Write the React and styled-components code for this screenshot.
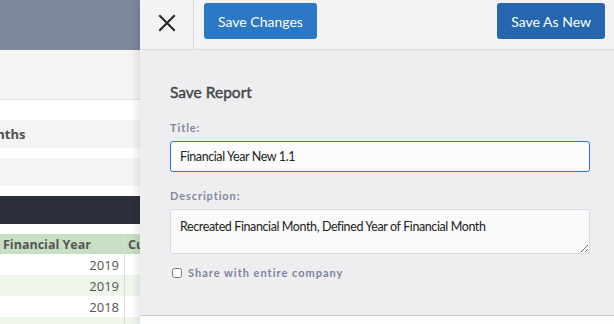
import React from "react";
import styled, { createGlobalStyle } from "styled-components";

const Global = createGlobalStyle`
  html, body { margin: 0; padding: 0; }
  body { width: 614px; height: 324px; overflow: hidden; font-family: "Open Sans", sans-serif; }
  * { box-sizing: border-box; }
`;

const Screen = styled.div`
  position: relative;
  width: 614px;
  height: 324px;
  overflow: hidden;
  background: #fff;
`;

const Page = styled.div`
  display: flex;
  flex-direction: column;
  width: 140px;
  overflow: hidden;
`;

const PageHeader = styled.div`
  height: 50px;
  background: #7e879b;
`;

const Toolbar = styled.div`
  height: 50px;
  background: #f4f4f4;
  border-bottom: 1px solid #e2e2e2;
`;

const Band = styled.div`
  height: ${(p) => p.$h}px;
  background: ${(p) => p.$bg};
  margin-top: ${(p) => p.$mt || 0}px;
  display: flex;
  align-items: center;
  overflow: hidden;
  white-space: nowrap;
`;

const BandLabel = styled.span`
  font-family: "Open Sans", sans-serif;
  font-weight: 700;
  font-size: 13px;
  color: #4f4f4f;
  margin-left: -24px;
`;

const Table = styled.div`
  margin-top: 10px;
  display: flex;
  flex-direction: column;
`;

const Row = styled.div`
  display: grid;
  grid-template-columns: 125px 1fr;
  height: ${(p) => (p.$head ? 20 : 21)}px;
  background: ${(p) => (p.$head ? "#c9dfc4" : p.$alt ? "#eef6ec" : "#fff")};
  font-family: "Open Sans", sans-serif;
  font-size: 13px;
  color: #555;
`;

const Cell = styled.div`
  display: flex;
  align-items: center;
  justify-content: ${(p) => (p.$right ? "flex-end" : "flex-start")};
  padding: 0 5px 0 3px;
  border-right: ${(p) => (p.$sep ? "1px solid #dcdcdc" : "none")};
  font-weight: ${(p) => (p.$bold ? 700 : 400)};
  font-size: ${(p) => (p.$bold ? 12.5 : 13)}px;
  white-space: nowrap;
  overflow: hidden;
`;

const Drawer = styled.aside`
  position: absolute;
  top: 0;
  left: 140px;
  width: 474px;
  height: 324px;
  display: flex;
  flex-direction: column;
  background: #fcfdfd;
  box-shadow: -3px 0 7px rgba(0, 0, 0, 0.1);
  font-family: Lato, "Open Sans", sans-serif;
`;

const DrawerHeader = styled.header`
  height: 50px;
  flex: none;
  display: flex;
  align-items: stretch;
  background: #f3f3f5;
  border-bottom: 1px solid #dcdce0;
`;

const CloseCell = styled.button`
  width: 54px;
  border: none;
  border-right: 1px solid #d6d6da;
  background: transparent;
  display: flex;
  align-items: center;
  justify-content: center;
  padding: 0 0 4px 0;
  cursor: pointer;
`;

const Actions = styled.div`
  flex: 1;
  display: flex;
  justify-content: space-between;
  align-items: flex-start;
  padding: 3px 9px 0 10px;
`;

const Button = styled.button`
  height: 36px;
  padding: 0 ${(p) => p.$px}px;
  border: none;
  border-radius: 3px;
  background: ${(p) => p.$bg};
  color: #fff;
  font-family: Lato, sans-serif;
  font-size: 14px;
  cursor: pointer;
`;

const Body = styled.div`
  height: 266px;
  flex: none;
  background: #eeeef1;
  border-bottom: 1px solid #cbcbd3;
  padding: 33px 24px 0 30px;
  display: flex;
  flex-direction: column;
`;

const Heading = styled.h2`
  margin: 0;
  font-size: 15.5px;
  line-height: 18px;
  font-weight: 400;
  color: #444;
  -webkit-text-stroke: 0.4px #444;
`;

const FieldLabel = styled.label`
  margin-top: ${(p) => p.$mt}px;
  font-size: 11px;
  line-height: 14px;
  font-weight: 700;
  letter-spacing: 0.9px;
  color: #8088a0;
`;

const Input = styled.input`
  margin-top: 6px;
  height: 31px;
  width: 420px;
  border: 1px solid #2b77c6;
  border-radius: 3px;
  background: #fcfcfc;
  padding: 0 9px;
  font-family: Lato, sans-serif;
  font-size: 12.5px;
  letter-spacing: -0.4px;
  color: #222;
  outline: none;
`;

const TextArea = styled.textarea`
  margin-top: 6px;
  height: 45px;
  width: 420px;
  border: 1px solid #d3dae5;
  border-radius: 3px;
  background: #fafafa;
  padding: 9px 9px;
  font-family: Lato, sans-serif;
  font-size: 12.5px;
  letter-spacing: -0.4px;
  line-height: 16px;
  color: #222;
  resize: vertical;
  outline: none;
`;

const CheckRow = styled.label`
  margin-top: 12px;
  display: flex;
  align-items: center;
  gap: 6px;
  padding-left: 2px;
  font-size: 11px;
  font-weight: 700;
  letter-spacing: 1px;
  color: #7d849b;
`;

const Check = styled.input`
  margin: 0;
  width: 10px;
  height: 10px;
`;

const years = ["2019", "2019", "2018", "2018"];

export default function App() {
  return (
    <>
      <Global />
      <Screen>
        <Page>
          <PageHeader />
          <Toolbar />
          <Band $h={28} $bg="#f4f4f4" $mt={20}>
            <BandLabel>Months</BandLabel>
          </Band>
          <Band $h={28} $bg="#f4f4f4" $mt={10} />
          <Band $h={28} $bg="#2b303b" $mt={10} />
          <Table>
            <Row $head>
              <Cell $sep $bold>Financial Year</Cell>
              <Cell $bold>Cu</Cell>
            </Row>
            {years.map((y, i) => (
              <Row key={i} $alt={i % 2 === 1}>
                <Cell $sep $right>{y}</Cell>
                <Cell />
              </Row>
            ))}
          </Table>
        </Page>
        <Drawer>
          <DrawerHeader>
            <CloseCell aria-label="Close">
              <svg width="18" height="18" viewBox="0 0 18 18">
                <path d="M2 2 L16 16 M16 2 L2 16" stroke="#222" strokeWidth="2" strokeLinecap="square" />
              </svg>
            </CloseCell>
            <Actions>
              <Button $bg="#2a78c6" $px={14}>Save Changes</Button>
              <Button $bg="#2467ae" $px={14}>Save As New</Button>
            </Actions>
          </DrawerHeader>
          <Body>
            <Heading>Save Report</Heading>
            <FieldLabel $mt={20}>Title:</FieldLabel>
            <Input defaultValue="Financial Year New 1.1" />
            <FieldLabel $mt={17}>Description:</FieldLabel>
            <TextArea defaultValue="Recreated Financial Month, Defined Year of Financial Month" />
            <CheckRow>
              <Check type="checkbox" />
              Share with entire company
            </CheckRow>
          </Body>
        </Drawer>
      </Screen>
    </>
  );
}
